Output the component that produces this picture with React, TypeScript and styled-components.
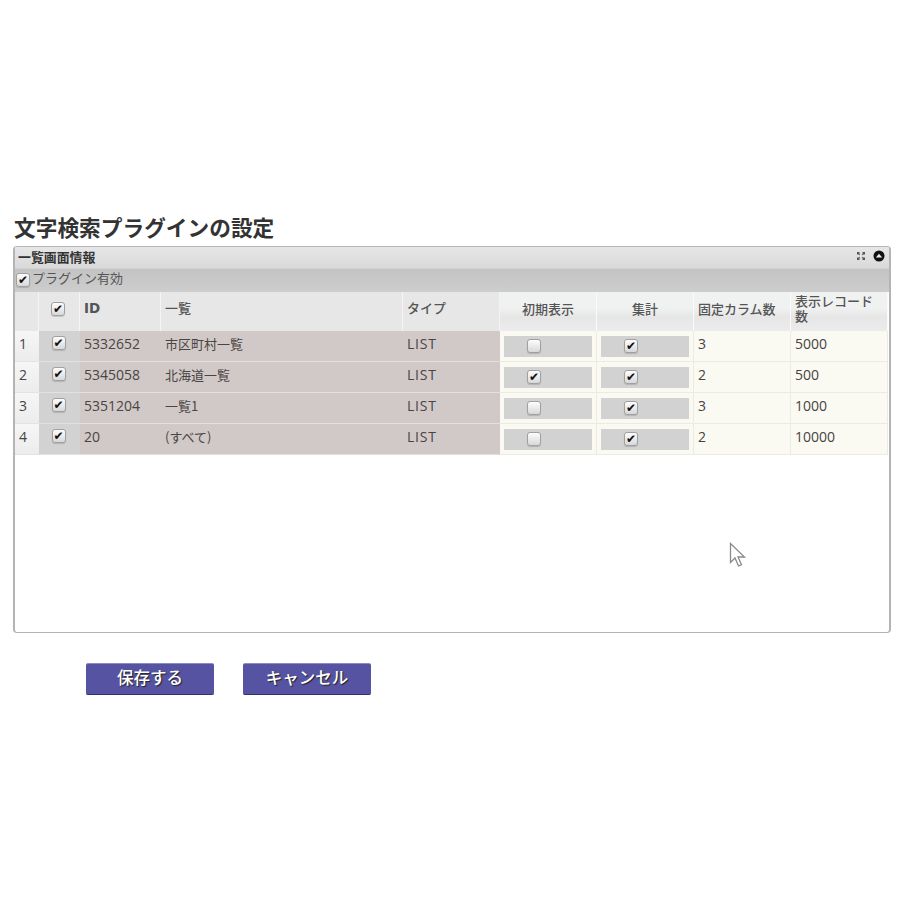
import React, { FC } from 'react'
import styled, { createGlobalStyle } from 'styled-components'

const JP = `"Noto Sans CJK JP", "Noto Sans", sans-serif`
const LATIN = `"Open Sans", "Noto Sans CJK JP", sans-serif`

const rows = [
  { no: 1, id: '5332652', name: '市区町村一覧', first: false, sum: true, fixed: 3, records: 5000 },
  { no: 2, id: '5345058', name: '北海道一覧', first: true, sum: true, fixed: 2, records: 500 },
  { no: 3, id: '5351204', name: '一覧1', first: false, sum: true, fixed: 3, records: 1000 },
  { no: 4, id: '20', name: '(すべて)', first: false, sum: true, fixed: 2, records: 10000 },
]

export default function App() {
  return (
    <Page>
      <GlobalStyle />
      <Title>文字検索プラグインの設定</Title>
      <Panel>
        <PanelHead>
          <PanelTitle>一覧画面情報</PanelTitle>
          <PanelIcons>
            <svg width='10' height='10' viewBox='0 0 10 10' fill='#555'>
              <path d='M1 1h3L3 2l1.2 1.2-1 1L2 3 1 4zM9 1v3L8 3 6.800 4.200l-1-1L7 2 6 1zM1 9V6l1 1 1.200-1.200 1 1L3 8l1 1zM9 9H6l1-1-1.200-1.200 1-1L8 7l1-1z' />
            </svg>
            <svg width='12' height='12' viewBox='0 0 12 12'>
              <circle cx='6' cy='6' r='5.500' fill='#111' />
              <path d='M2.800 7.500 6 3.800l3.200 3.700z' fill='#eee' />
            </svg>
          </PanelIcons>
        </PanelHead>
        <PluginRow>
          <Check type='checkbox' defaultChecked />
          <PluginText>プラグイン有効</PluginText>
        </PluginRow>
        <Grid>
          <PlainHead />
          <CheckHead>
            <Check type='checkbox' defaultChecked />
          </CheckHead>
          <IdHead>ID</IdHead>
          <PlainHead>一覧</PlainHead>
          <PlainHead>タイプ</PlainHead>
          <LightHead $center>初期表示</LightHead>
          <LightHead $center>集計</LightHead>
          <LightHead>固定カラム数</LightHead>
          <LightHead>表示レコード数</LightHead>
          {rows.map(row => (
            <Row key={row.no} row={row} />
          ))}
        </Grid>
        <Cursor width='18' height='26' viewBox='0 0 18 26'>
          <path
            d='M1.500 1.500v19l4.500-4.500 3.500 8 3-1.300-3.500-7.700h6.500z'
            fill='#fff'
            stroke='#8a8a8a'
            strokeWidth='1.300'
          />
        </Cursor>
      </Panel>
      <Buttons>
        <Button>保存する</Button>
        <Button>キャンセル</Button>
      </Buttons>
    </Page>
  )
}

const Row: FC<{ row: (typeof rows)[number] }> = ({ row }) => (
  <>
    <NumberCell $latin>{row.no}</NumberCell>
    <CheckCell>
      <Check type='checkbox' defaultChecked />
    </CheckCell>
    <InfoCell $latin>{row.id}</InfoCell>
    <InfoCell>{row.name}</InfoCell>
    <TypeCell $latin>LIST</TypeCell>
    <EditCell>
      <CheckBlock>
        <Check type='checkbox' defaultChecked={row.first} />
      </CheckBlock>
    </EditCell>
    <EditCell>
      <CheckBlock>
        <Check type='checkbox' defaultChecked={row.sum} />
      </CheckBlock>
    </EditCell>
    <EditCell $latin>{row.fixed}</EditCell>
    <EditCell $latin>{row.records}</EditCell>
  </>
)

const GlobalStyle = createGlobalStyle`
  body {
    margin: 0;
    background: #fff;
    color: #444;
    font-family: ${JP};
  }
`

const Page = styled.div`
  padding: 213px 29px 0 13px;
`

const Title = styled.h1`
  margin: 0 0 5px 1px;
  font-size: 21.7px;
  line-height: 28px;
  font-weight: 700;
  color: #333;
`

const Panel = styled.section`
  position: relative;
  box-sizing: border-box;
  height: 387px;
  border: 1px solid #b4b4b4;
  border-left-width: 2px;
  border-right-width: 2px;
  border-radius: 4px;
  background: #fff;
`

const PanelHead = styled.header`
  display: flex;
  align-items: center;
  justify-content: space-between;
  box-sizing: border-box;
  height: 22px;
  padding: 0 4px 0 3px;
  background: linear-gradient(#e6e6e6, #dadada);
  border-bottom: 1px solid #d2d2d2;
`

const PanelTitle = styled.h2`
  margin: 0 0 2px;
  font-size: 12.9px;
  font-weight: 700;
  color: #333;
`

const PanelIcons = styled.div`
  display: flex;
  align-items: center;
  gap: 7px;
  margin-bottom: 3px;
`

const PluginRow = styled.label`
  display: flex;
  align-items: center;
  gap: 2px;
  box-sizing: border-box;
  height: 23px;
  padding: 0 0 1px 1px;
  font-size: 13px;
  color: #555;
  background: linear-gradient(#c3c3c3, #cdcdcd);
`

const PluginText = styled.span`
  margin-bottom: 6px;
`

const Grid = styled.div`
  display: grid;
  grid-template-columns: 24px 41px 81px 242px 97px 97px 97px 97px 97px;
  grid-template-rows: 39px repeat(4, 31px);
  width: 873px;
`

const Cell = styled.div<{ $latin?: boolean; $center?: boolean }>`
  display: flex;
  align-items: center;
  justify-content: ${p => (p.$center ? 'center' : 'flex-start')};
  box-sizing: border-box;
  padding: 0 4px 6px;
  font-family: ${p => (p.$latin ? LATIN : JP)};
  font-size: ${p => (p.$latin ? '14px' : '13px')};
  line-height: 15px;
`

const PlainHead = styled(Cell)`
  padding-bottom: 8px;
  font-weight: 500;
  color: #555;
  background: #e7e7e7;
  border-right: 1px solid #f4f4f4;
`

const CheckHead = styled(PlainHead)`
  justify-content: center;
  padding: 0 6px 6px 4px;
`

const IdHead = styled(PlainHead)`
  padding-bottom: 6px;
  font-family: 'DejaVu Sans', sans-serif;
  font-size: 13.5px;
  font-weight: 700;
`

const LightHead = styled(Cell)`
  padding-bottom: 7px;
  font-weight: 500;
  color: #555;
  background: linear-gradient(#f0f1f1 40%, #e6e6e6 65%, #ececec);
  border-right: 1px solid #fafafa;
`

const NumberCell = styled(Cell)`
  background: linear-gradient(#f6f6f6, #ececec);
  border-bottom: 1px solid #e2e2e2;
`

const CheckCell = styled(Cell)`
  justify-content: center;
  padding-right: 6px;
  background: #d2d2d2;
  border-bottom: 1px solid #e2e2e2;
`

const InfoCell = styled(Cell)`
  color: #4a4444;
  background: #d1c9c7;
  border-bottom: 1px solid #e4dedc;
`

const TypeCell = styled(InfoCell)`
  letter-spacing: 0.8px;
`

const EditCell = styled(Cell)`
  background: #fbfaf2;
  border-right: 1px solid #ecebe2;
  border-bottom: 1px solid #ecebe2;
  padding-bottom: ${p => (p.$latin ? '6px' : '0')};
`

const CheckBlock = styled.div`
  display: flex;
  align-items: center;
  flex: 1;
  height: 21px;
  padding-left: 23px;
  background: #d2d2d2;
`

const Check = styled.input`
  appearance: none;
  display: flex;
  align-items: center;
  justify-content: center;
  flex: none;
  box-sizing: border-box;
  width: 14px;
  height: 14px;
  margin: 0;
  border: 1px solid #a0a0a0;
  border-radius: 3px;
  background: linear-gradient(#fdfdfd, #d8d8d8);
  box-shadow: 0 1px 1px rgba(0, 0, 0, 0.15);

  &:checked::before {
    content: '✔';
    font-family: 'DejaVu Sans', sans-serif;
    font-size: 12px;
    line-height: 12px;
    color: #111;
  }
`

const Cursor = styled.svg`
  position: absolute;
  left: 714px;
  top: 295px;
`

const Buttons = styled.div`
  display: flex;
  gap: 29px;
  margin: 30px 0 0 73px;
`

const Button = styled.button`
  width: 128px;
  height: 32px;
  padding: 0 0 4px;
  border: 0;
  border-top: 1px solid #8d8bc6;
  border-bottom: 1px solid #34326e;
  border-radius: 2px;
  background: #5653a3;
  color: #fff;
  font-family: ${JP};
  font-size: 16.5px;
  font-weight: 500;
  text-shadow: 1px 1px 1px #222;
  cursor: pointer;
`
